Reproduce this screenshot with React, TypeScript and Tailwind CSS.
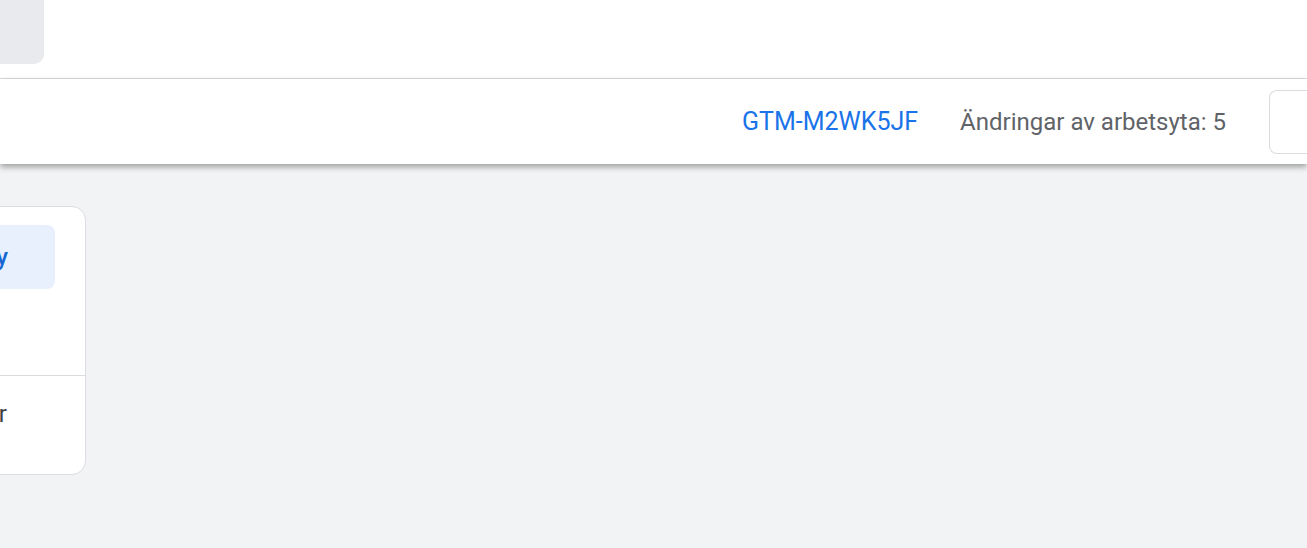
export default function App() {
  return (
    <div className="h-[548px] w-full overflow-hidden bg-[#f1f3f4] font-['Roboto',sans-serif]">
      {/* Top header strip */}
      <div className="h-[79px] border-b border-[#dadce0] bg-white">
        <div className="h-[64px] w-[44px] rounded-br-[10px] bg-[#e8eaed]" />
      </div>

      {/* Container bar */}
      <div className="relative z-10 flex h-[85px] items-center justify-end bg-white shadow-[0_3px_6px_rgba(0,0,0,0.35)]">
        <a className="text-[25px] leading-none text-[#1a73e8]">GTM-M2WK5JF</a>
        <span className="ml-[42px] text-[24px] leading-none text-[#5f6368]">Ändringar av arbetsyta: 5</span>
        <div className="ml-[43px] h-[64px] w-[38px] shrink-0 rounded-l-[8px] border border-r-0 border-[#dadce0] bg-white" />
      </div>

      {/* Side card */}
      <div className="mt-[42px] -ml-[300px] w-[386px] rounded-[14px] border border-[#dadce0] bg-white">
        <div className="px-[30px] pt-[18px] pb-[86px]">
          <div className="flex h-[64px] items-center justify-end rounded-[8px] bg-[#e8f0fe] pr-[47px]">
            <span className="text-[24px] font-medium text-[#1967d2]">Workspace Summary</span>
          </div>
        </div>
        <div className="flex h-[99px] items-start justify-end border-t border-[#dadce0] pt-[20px] pr-[78px]">
          <span className="text-[24px] text-[#3c4043]">Administratör</span>
        </div>
      </div>
    </div>
  )
}
